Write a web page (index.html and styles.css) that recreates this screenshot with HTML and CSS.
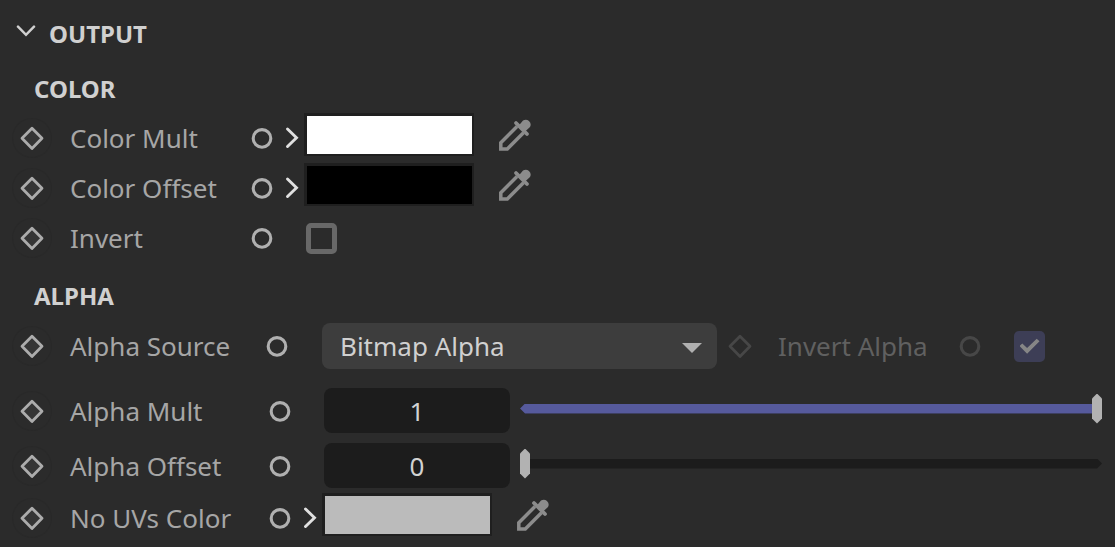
FILE: index.html
```html
<!DOCTYPE html>
<html lang="en">
<head>
    <meta charset="UTF-8">
    <meta name="viewport" content="width=device-width, initial-scale=1.0">
    <title>Output</title>
    <link rel="stylesheet" href="styles.css">
</head>
<body>
    <!-- shared icons -->
    <svg class="icons" aria-hidden="true">
        <symbol id="key" viewBox="0 0 40 40">
            <path d="M20 10.2 L30 20.3 L20 30.4 L10 20.3 Z" stroke="currentColor" stroke-width="2.8" stroke-linejoin="round"/>
        </symbol>
        <symbol id="ring" viewBox="0 0 24 24">
            <circle cx="12" cy="12.4" r="8.8" fill="none" stroke="currentColor" stroke-width="3.1"/>
        </symbol>
        <symbol id="arrow" viewBox="0 0 24 24">
            <path d="M7.5 3 L16.5 11.7 L7.5 20.5" fill="none" stroke="currentColor" stroke-width="2.9" stroke-linecap="round" stroke-linejoin="miter"/>
        </symbol>
        <symbol id="picker" viewBox="0 0 32 32">
            <path d="M18 7.5 L1.8 23.7 V30 H8.3 L24.5 13.8" fill="none" stroke="currentColor" stroke-width="3.5"/>
            <path d="M17 4 L28 15" fill="none" stroke="currentColor" stroke-width="3.8" stroke-linecap="round"/>
            <path d="M19 7.5 L24 1.6 A4.9 4.9 0 0 1 31 8 L25 13.5 Z" fill="currentColor"/>
        </symbol>
    </svg>

    <form class="panel" action="#" onsubmit="event.preventDefault();">
        <h2 class="panel-title">
            <button type="button" class="toggle" aria-expanded="true">
                <svg viewBox="0 0 20 12" width="20" height="12"><path d="M2 1.7 L10 9.8 L18 1.7" fill="none" stroke="currentColor" stroke-width="2.5" stroke-linecap="round"/></svg>
                OUTPUT
            </button>
        </h2>

        <section class="color">
            <h3>COLOR</h3>

            <div class="row">
                <button type="button" class="key" aria-label="Keyframe"><svg><use href="#key"/></svg></button>
                <label for="colorMult">Color Mult</label>
                <button type="button" class="ring" aria-label="Texture"><svg><use href="#ring"/></svg></button>
                <button type="button" class="arrow" aria-label="Expand"><svg><use href="#arrow"/></svg></button>
                <input type="color" id="colorMult" value="#ffffff">
                <button type="button" class="picker" aria-label="Pick color"><svg><use href="#picker"/></svg></button>
            </div>

            <div class="row">
                <button type="button" class="key" aria-label="Keyframe"><svg><use href="#key"/></svg></button>
                <label for="colorOffset">Color Offset</label>
                <button type="button" class="ring" aria-label="Texture"><svg><use href="#ring"/></svg></button>
                <button type="button" class="arrow" aria-label="Expand"><svg><use href="#arrow"/></svg></button>
                <input type="color" id="colorOffset" value="#000000">
                <button type="button" class="picker" aria-label="Pick color"><svg><use href="#picker"/></svg></button>
            </div>

            <div class="row">
                <button type="button" class="key" aria-label="Keyframe"><svg><use href="#key"/></svg></button>
                <label for="invert">Invert</label>
                <button type="button" class="ring" aria-label="Texture"><svg><use href="#ring"/></svg></button>
                <input type="checkbox" id="invert">
            </div>
        </section>

        <section class="alpha">
            <h3>ALPHA</h3>

            <div class="row source">
                <button type="button" class="key" aria-label="Keyframe"><svg><use href="#key"/></svg></button>
                <label for="alphaSource">Alpha Source</label>
                <button type="button" class="ring" aria-label="Texture"><svg><use href="#ring"/></svg></button>
                <div class="select">
                    <select id="alphaSource">
                        <option>Bitmap Alpha</option>
                    </select>
                </div>
                <div class="invert-alpha">
                    <button type="button" class="key" aria-label="Keyframe" disabled><svg><use href="#key"/></svg></button>
                    <label for="invertAlpha">Invert Alpha</label>
                    <button type="button" class="ring" aria-label="Texture" disabled><svg><use href="#ring"/></svg></button>
                    <input type="checkbox" id="invertAlpha" checked disabled>
                </div>
            </div>

            <div class="row tall">
                <button type="button" class="key" aria-label="Keyframe"><svg><use href="#key"/></svg></button>
                <label for="alphaMult">Alpha Mult</label>
                <button type="button" class="ring" aria-label="Texture"><svg><use href="#ring"/></svg></button>
                <input type="text" id="alphaMult" value="1">
                <div class="slider" style="--value: 100%">
                    <input type="range" min="0" max="1" step="0.01" value="1" aria-label="Alpha Mult">
                </div>
            </div>

            <div class="row tall">
                <button type="button" class="key" aria-label="Keyframe"><svg><use href="#key"/></svg></button>
                <label for="alphaOffset">Alpha Offset</label>
                <button type="button" class="ring" aria-label="Texture"><svg><use href="#ring"/></svg></button>
                <input type="text" id="alphaOffset" value="0">
                <div class="slider" style="--value: 0%">
                    <input type="range" min="0" max="1" step="0.01" value="0" aria-label="Alpha Offset">
                </div>
            </div>

            <div class="row">
                <button type="button" class="key" aria-label="Keyframe"><svg><use href="#key"/></svg></button>
                <label for="noUvs">No UVs Color</label>
                <button type="button" class="ring" aria-label="Texture"><svg><use href="#ring"/></svg></button>
                <button type="button" class="arrow" aria-label="Expand"><svg><use href="#arrow"/></svg></button>
                <input type="color" id="noUvs" value="#bbbbbb">
                <button type="button" class="picker" aria-label="Pick color"><svg><use href="#picker"/></svg></button>
            </div>
        </section>
    </form>

    <script>
        // keep each slider and its number field in step
        document.querySelectorAll(".slider input").forEach(function(range){
            var field = range.parentElement.previousElementSibling;

            range.addEventListener("input", function(){
                field.value = range.value;
                range.parentElement.style.setProperty("--value", range.value * 100 + "%");
            });

            field.addEventListener("change", function(){
                range.value = field.value;
                range.parentElement.style.setProperty("--value", range.value * 100 + "%");
            });
        });
    </script>
</body>
</html>
```

FILE: styles.css
```css
*{
    margin: 0;
    padding: 0;
    box-sizing: border-box;
}
body{
    background-color: #2b2b2b;
    color: #a6a6a6;
    font-family: "Noto Sans", "Open Sans", sans-serif;
    font-size: 26px;
    line-height: 36px;
}
button,input,select{
    font: inherit;
    color: inherit;
    background: none;
    border: none;
    flex-shrink: 0;
}
svg{
    display: block;
}
.icons{
    display: none;
}
.panel{
    padding: 16px 12px 3px;
}
h2,h3{
    font-size: 24px;
    line-height: 36px;
    font-weight: bold;
    color: #d0d0d0;
}
h3{
    padding-left: 22px;
}
.toggle{
    display: flex;
    gap: 13px;
    padding-left: 4px;
}
.toggle svg{
    margin-top: 9px;
}
.color{
    padding-top: 19px;
}
.color h3{
    margin-bottom: 6px;
}
.alpha{
    padding-top: 15px;
}
.alpha h3{
    margin-bottom: 7px;
}

/* rows */
.row{
    display: flex;
    align-items: center;
    height: 50px;
}
.tall{
    height: 55px;
}
.source{
    margin-bottom: 12px;
}
.row label{
    width: 198px;
    flex-shrink: 0;
    white-space: nowrap;
}
.color label{
    width: 180px;
}
.source label{
    width: 195px;
}

/* icon buttons */
.key{
    width: 40px;
    height: 40px;
    margin-right: 18px;
    border-radius: 50%;
    box-shadow: inset 0 0 0 1px #292929;
    color: #acacac;
    fill: #353535;
}
.key svg{
    width: 40px;
    height: 40px;
}
.ring{
    color: #b0b0b0;
}
.ring svg,.arrow svg{
    width: 24px;
    height: 24px;
}
.arrow{
    margin-left: 6px;
    color: #e0e0e0;
}
.picker{
    align-self: flex-start;
    margin: 6px 0 0 25px;
    color: #8c8c8c;
}
.picker svg{
    width: 32px;
    height: 32px;
}

/* fields */
input[type=color]{
    appearance: none;
    align-self: flex-start;
    width: 170px;
    height: 43px;
    border: solid #1f1f1f;
    border-width: 3px 2px 2px 3px;
}
input[type=color]::-webkit-color-swatch-wrapper{
    padding: 0;
}
input[type=color]::-webkit-color-swatch{
    border: none;
}
input[type=checkbox]{
    appearance: none;
    width: 31px;
    height: 31px;
    margin-left: 32px;
    border: 5px solid #686868;
    border-radius: 5px;
}
input[type=checkbox]:checked{
    display: grid;
    place-items: center;
    border: none;
    background-color: #3d3e56;
}
input[type=checkbox]:checked::before{
    content: "";
    width: 20px;
    height: 16px;
    background-color: #868686;
    clip-path: polygon(0 50%, 14% 34%, 38% 62%, 86% 4%, 100% 20%, 38% 98%);
}
input[type=text]{
    width: 186px;
    height: 45px;
    margin-left: 32px;
    border-radius: 8px;
    background-color: #1c1c1c;
    color: #d2d2d2;
    text-align: center;
}

.select{
    display: grid;
    align-items: center;
    flex: 1;
    margin-left: 33px;
}
.select select{
    grid-area: 1 / 1;
    appearance: none;
    width: 100%;
    height: 46px;
    padding: 0 48px 0 18px;
    border-radius: 8px;
    background-color: #3d3d3d;
    color: #d0d0d0;
}
.select::after{
    content: "";
    grid-area: 1 / 1;
    justify-self: end;
    width: 20px;
    height: 10px;
    margin: 4px 15px 0 0;
    background-color: #b0b0b0;
    clip-path: polygon(0 0, 100% 0, 50% 100%);
    pointer-events: none;
    z-index: 1;
}

.invert-alpha{
    display: flex;
    align-items: center;
    margin-right: 58px;
    padding-left: 3px;
    color: #606060;
}
.invert-alpha label{
    width: 180px;
}
.invert-alpha .key,.invert-alpha .ring{
    color: #474747;
    fill: none;
    box-shadow: none;
}

/* sliders */
.slider{
    flex: 1;
    display: grid;
    align-items: center;
    margin: 0 1px 4px 10px;
}
.slider::before{
    content: "";
    grid-area: 1 / 1;
    height: 10px;
    background: linear-gradient(#565a9c, #565a9c) no-repeat left / var(--value) 100% #1c1c1c;
    clip-path: polygon(0 50%, 5px 0, calc(100% - 5px) 0, 100% 50%, calc(100% - 5px) 100%, 5px 100%);
}
.slider input{
    grid-area: 1 / 1;
    appearance: none;
    width: 100%;
    height: 30px;
    z-index: 1;
}
.slider input::-webkit-slider-thumb{
    appearance: none;
    width: 10px;
    height: 30px;
    background-color: #b2b2b2;
    clip-path: polygon(50% 0, 100% 5px, 100% 25px, 50% 100%, 0 25px, 0 5px);
}
```
